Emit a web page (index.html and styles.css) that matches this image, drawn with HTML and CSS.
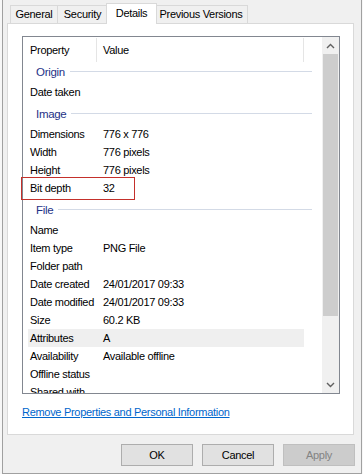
FILE: index.html
```html
<!DOCTYPE html>
<html lang="en">
<head>
    <meta charset="UTF-8"/>
    <title>Properties</title>
    <link rel="stylesheet" href="styles.css">
</head>
<body>
    <div class="dialog">
        <div class="tabs">
            <div class="tab tab_general">General</div>
            <div class="tab tab_security">Security</div>
            <div class="tab tab_details selected">Details</div>
            <div class="tab tab_previous">Previous Versions</div>
        </div>

        <div class="panel">
            <div class="listbox">
                <div class="list">
                    <div class="head">
                        <span class="col_name">Property</span>
                        <span class="col_value">Value</span>
                    </div>

                    <div class="group"><span>Origin</span></div>
                    <div class="row"><span class="name">Date taken</span><span class="value"></span></div>

                    <div class="group"><span>Image</span></div>
                    <div class="row"><span class="name">Dimensions</span><span class="value">776 x 776</span></div>
                    <div class="row"><span class="name">Width</span><span class="value">776 pixels</span></div>
                    <div class="row"><span class="name">Height</span><span class="value">776 pixels</span></div>
                    <div class="row marked"><span class="name">Bit depth</span><span class="value">32</span><span class="mark"></span></div>

                    <div class="group"><span>File</span></div>
                    <div class="row"><span class="name">Name</span><span class="value"></span></div>
                    <div class="row"><span class="name">Item type</span><span class="value">PNG File</span></div>
                    <div class="row"><span class="name">Folder path</span><span class="value"></span></div>
                    <div class="row"><span class="name">Date created</span><span class="value">24/01/2017 09:33</span></div>
                    <div class="row"><span class="name">Date modified</span><span class="value">24/01/2017 09:33</span></div>
                    <div class="row"><span class="name">Size</span><span class="value">60.2 KB</span></div>
                    <div class="row hot"><span class="name">Attributes</span><span class="value">A</span></div>
                    <div class="row"><span class="name">Availability</span><span class="value">Available offline</span></div>
                    <div class="row"><span class="name">Offline status</span><span class="value"></span></div>
                    <div class="row"><span class="name">Shared with</span><span class="value"></span></div>
                </div>

                <div class="scrollbar">
                    <div class="arrow">
                        <svg width="9" height="6" viewBox="0 0 9 6"><polyline points="1,5 4.5,1.5 8,5" fill="none" stroke="#606060" stroke-width="1.4"/></svg>
                    </div>
                    <div class="thumb"></div>
                    <div class="track"></div>
                    <div class="arrow">
                        <svg width="9" height="6" viewBox="0 0 9 6"><polyline points="1,1 4.5,4.5 8,1" fill="none" stroke="#606060" stroke-width="1.4"/></svg>
                    </div>
                </div>
            </div>

            <a class="remove_link" href="#">Remove Properties and Personal Information</a>
        </div>

        <div class="buttons">
            <div class="button">OK</div>
            <div class="button">Cancel</div>
            <div class="button disabled">Apply</div>
        </div>
    </div>
</body>
</html>
```

FILE: styles.css
```css
body {
    margin: 0;
    background: #f7f7f7;
    font-family: "Liberation Sans", Arial, sans-serif;
    font-size: 11px;
    letter-spacing: -0.3px;
    color: #000;
}

.dialog {
    box-sizing: border-box;
    width: 360px;
    height: 474px;
    margin-left: 2px;
    background: #f0f0f0;
    border: 1px solid #a0a0a0;
    border-top: none;
}

/* tab strip */
.tabs {
    display: flex;
    align-items: flex-end;
    height: 23px;
    padding-left: 7px;
}
.tab {
    box-sizing: border-box;
    height: 18px;
    line-height: 16px;
    text-align: center;
    background: #f0f0f0;
    border: 1px solid #d9d9d9;
    border-bottom: none;
}
.tab + .tab {
    margin-left: -1px;
}
.tab_general { width: 48px; }
.tab_security { width: 51px; }
.tab_details { width: 47px; }
.tab_previous { width: 94px; }

.tab.selected {
    position: relative;
    z-index: 1;
    width: 51px;
    height: 21px;
    line-height: 18px;
    margin: 0 -2px -1px -2px;
    background: #fff;
}

/* white page */
.panel {
    box-sizing: border-box;
    width: 347px;
    height: 412px;
    margin-left: 4px;
    padding: 12px 0 0 14px;
    background: #fff;
    border: 1px solid #d9d9d9;
}

.listbox {
    box-sizing: border-box;
    display: flex;
    width: 318px;
    height: 358px;
    border: 1px solid #828790;
}
.list {
    flex: 1;
    clip-path: inset(0 -4px 0 -4px);
}

.head {
    display: flex;
    height: 22px;
    line-height: 18px;
    padding-top: 4px;
    box-sizing: border-box;
}
.head span {
    box-sizing: border-box;
    height: 24px;
    margin-top: -3px;
    padding-top: 3px;
    border-right: 1px solid #e5e5e5;
}
.col_name {
    width: 74px;
    padding-left: 7px;
}
.col_value {
    width: 207px;
    padding-left: 6px;
}

.group {
    display: flex;
    align-items: center;
    box-sizing: border-box;
    height: 24px;
    padding: 2px 10px 0 13px;
    color: #1e3287;
    font-size: 11.5px;
}
.group::after {
    content: "";
    flex: 1;
    height: 1px;
    margin: 0 0 1px 5px;
    background: #d3dae6;
}

.row {
    display: flex;
    height: 18px;
    line-height: 18px;
    width: 276px;
    margin-left: 5px;
    padding-left: 2px;
    box-sizing: border-box;
    white-space: nowrap;
}
.row .name {
    width: 73px;
}
.row.hot {
    background: #efefef;
}
.row.marked {
    position: relative;
}
.mark {
    position: absolute;
    left: -7px;
    top: -2px;
    width: 114px;
    height: 23px;
    box-sizing: border-box;
    border: 1px solid #c4302b;
}

/* scroll bar */
.scrollbar {
    display: flex;
    flex-direction: column;
    width: 17px;
    background: #f0f0f0;
}
.arrow {
    height: 17px;
    display: flex;
    align-items: center;
    justify-content: center;
}
.thumb {
    height: 262px;
    margin: 0 1px;
    background: #cdcdcd;
}
.track {
    flex: 1;
}

.remove_link {
    display: inline-block;
    margin-top: 11px;
    line-height: 15px;
    color: #0066cc;
    text-decoration: underline;
}

/* dialog buttons */
.buttons {
    display: flex;
    justify-content: flex-end;
    gap: 9px;
    margin-top: 9px;
    padding-right: 6px;
}
.button {
    box-sizing: border-box;
    width: 72px;
    height: 22px;
    line-height: 20px;
    text-align: center;
    background: #e1e1e1;
    border: 1px solid #adadad;
}
.button.disabled {
    background: #cccccc;
    border-color: #bfbfbf;
    color: #838383;
}
```
